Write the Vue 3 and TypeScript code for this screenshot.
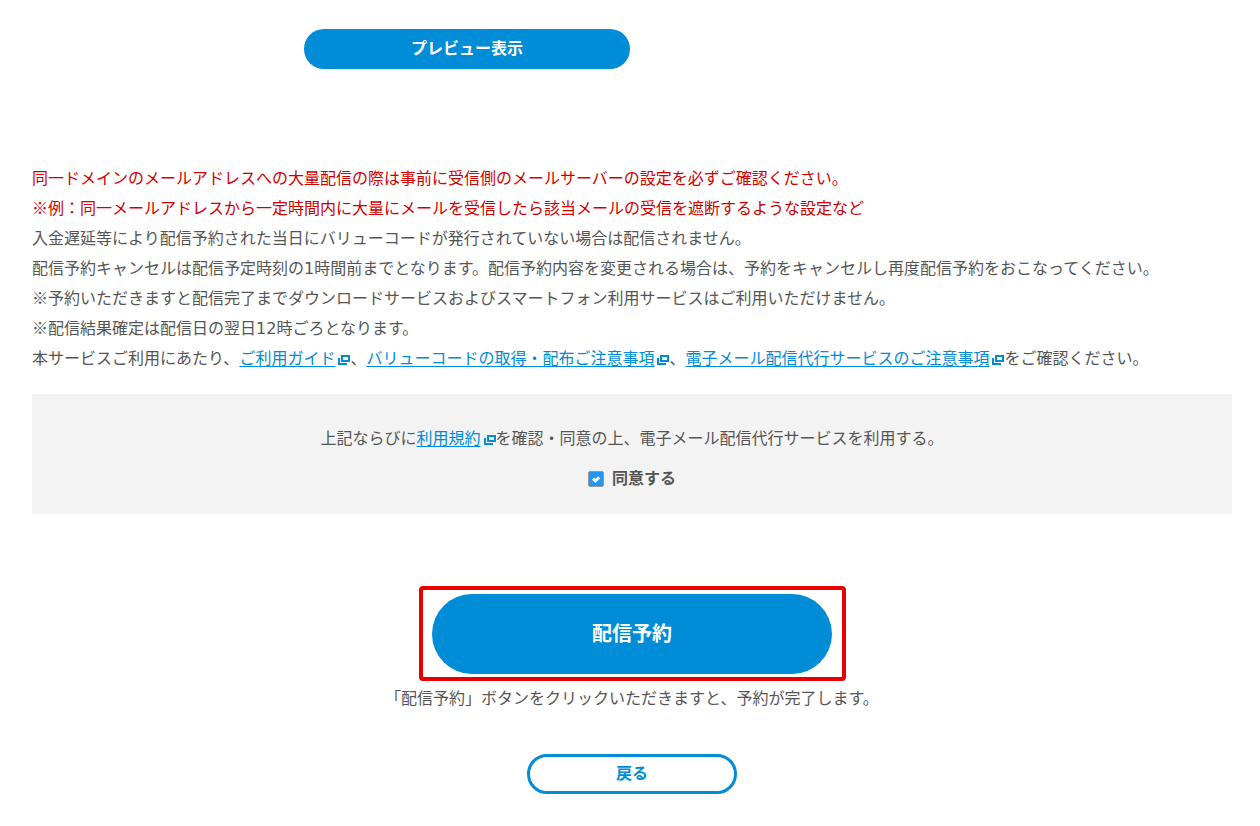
<script setup lang="ts">
import { ref } from 'vue'

const agreed = ref(true)
</script>

<template>
  <main class="page">
    <div class="preview">
      <button type="button" class="btn btn-preview">プレビュー表示</button>
    </div>

    <section class="notes">
      <p class="alert">同一ドメインのメールアドレスへの大量配信の際は事前に受信側のメールサーバーの設定を必ずご確認ください。</p>
      <p class="alert">※例：同一メールアドレスから一定時間内に大量にメールを受信したら該当メールの受信を遮断するような設定など</p>
      <p>入金遅延等により配信予約された当日にバリューコードが発行されていない場合は配信されません。</p>
      <p>配信予約キャンセルは配信予定時刻の<span class="num">1</span>時間前までとなります。配信予約内容を変更される場合は、予約をキャンセルし再度配信予約をおこなってください。</p>
      <p>※予約いただきますと配信完了までダウンロードサービスおよびスマートフォン利用サービスはご利用いただけません。</p>
      <p>※配信結果確定は配信日の翌日<span class="num">12</span>時ごろとなります。</p>
      <p>本サービスご利用にあたり、<a href="#guide">ご利用ガイド</a><svg class="ext" viewBox="0 0 12 10" aria-hidden="true"><path d="M3 0h9v7H3zM5 2v3h5V2z" fill-rule="evenodd" /><path d="M0 3h2v5h7v2H0z" /></svg>、<a href="#code">バリューコードの取得・配布ご注意事項</a><svg class="ext" viewBox="0 0 12 10" aria-hidden="true"><path d="M3 0h9v7H3zM5 2v3h5V2z" fill-rule="evenodd" /><path d="M0 3h2v5h7v2H0z" /></svg>、<a href="#mail">電子メール配信代行サービスのご注意事項</a><svg class="ext" viewBox="0 0 12 10" aria-hidden="true"><path d="M3 0h9v7H3zM5 2v3h5V2z" fill-rule="evenodd" /><path d="M0 3h2v5h7v2H0z" /></svg>をご確認ください。</p>
    </section>

    <section class="consent">
      <p>上記ならびに<a href="#terms">利用規約</a><svg class="ext" viewBox="0 0 12 10" aria-hidden="true"><path d="M3 0h9v7H3zM5 2v3h5V2z" fill-rule="evenodd" /><path d="M0 3h2v5h7v2H0z" /></svg>を確認・同意の上、電子メール配信代行サービスを利用する。</p>
      <label class="agree" for="agree">
        <span class="check">
          <input id="agree" v-model="agreed" type="checkbox" />
          <svg v-if="agreed" viewBox="0 0 16 16" aria-hidden="true"><path d="M5 7.6l2.4 2.4L11.2 6.2" /></svg>
        </span>
        同意する
      </label>
    </section>

    <section class="actions">
      <div class="highlight">
        <button type="button" class="btn btn-submit">配信予約</button>
      </div>
      <p>「配信予約」ボタンをクリックいただきますと、予約が完了します。</p>
      <button type="button" class="btn btn-back">戻る</button>
    </section>
  </main>
</template>

<style>
body {
  background: #fff;
}
</style>

<style scoped>
.page {
  box-sizing: border-box;
  padding: 29px 28px 32px 32px;
  color: #555;
  font: 16px/30px "Noto Sans CJK JP", sans-serif;
}
p {
  margin: 0;
}
a {
  color: #008cd6;
  text-decoration: underline;
  text-underline-offset: 2px;
}
.btn {
  display: block;
  box-sizing: border-box;
  padding: 0 0 4px;
  border: 0;
  border-radius: 40px;
  background: #008cd6;
  color: #fff;
  font: bold 16px/24px "Noto Sans CJK JP", sans-serif;
  cursor: pointer;
}
.preview {
  padding-left: 272px;
}
.btn-preview {
  width: 326px;
  height: 40px;
}
.notes {
  margin-top: 93px;
}
.alert {
  color: #d00000;
}
.num {
  font-family: "DejaVu Sans", sans-serif;
  line-height: 1;
}
.ext {
  width: 12px;
  height: 10px;
  margin-left: 3px;
  vertical-align: -1px;
  fill: #008cd6;
}
.consent {
  display: flex;
  flex-direction: column;
  align-items: center;
  gap: 10px;
  margin-top: 22px;
  padding: 28px 0 22px;
  background: #f3f3f3;
}
.agree {
  display: flex;
  align-items: center;
  gap: 8px;
  font-weight: bold;
}
.check {
  display: grid;
  width: 16px;
  height: 16px;
  margin-top: 4px;
}
.check > * {
  grid-area: 1 / 1;
}
.check input {
  appearance: none;
  box-sizing: border-box;
  width: 16px;
  height: 16px;
  margin: 0;
  border: 1px solid #999;
  border-radius: 2px;
  background: #fff;
}
.check input:checked {
  background: #2196f3;
}
.check svg {
  z-index: 1;
  pointer-events: none;
  fill: none;
  stroke: #fff;
  stroke-width: 3;
}
.actions {
  display: flex;
  flex-direction: column;
  align-items: center;
  margin-top: 80px;
}
.highlight {
  position: relative;
}
.highlight::after {
  content: "";
  position: absolute;
  inset: -8px -14px -7px -13px;
  border: 4px solid #e60000;
  border-radius: 4px;
  pointer-events: none;
}
.btn-submit {
  width: 400px;
  height: 80px;
  padding-bottom: 2px;
  font-size: 20px;
}
.actions p {
  margin: 8px 0 42px;
}
.btn-back {
  width: 210px;
  height: 40px;
  border: 3px solid #008cd6;
  background: #fff;
  color: #008cd6;
}
</style>
